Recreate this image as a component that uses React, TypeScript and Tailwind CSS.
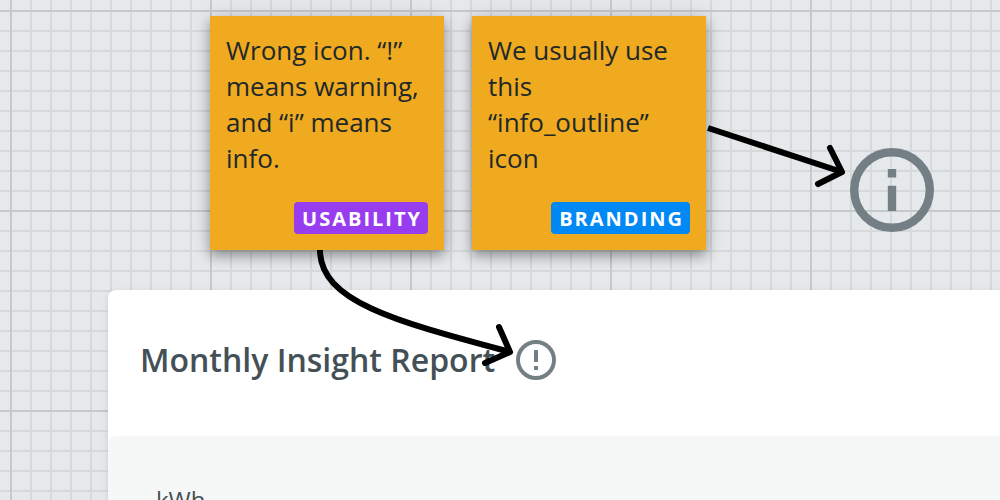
import type { ReactNode } from "react";

type NoteProps = { tag: string; tagClass: string; children: ReactNode };

function StickyNote({ tag, tagClass, children }: NoteProps) {
  return (
    <article className="flex h-[234px] w-[234px] shrink-0 flex-col justify-between bg-[#f0aa1f] p-4 shadow-[0_6px_12px_rgba(0,0,0,0.34),0_0_20px_rgba(0,0,0,0.1)]">
      <p className="text-[26px] leading-9 text-[#20282a]">{children}</p>
      <span
        className={`self-end rounded-sm pt-0.5 pr-1.5 pl-2 text-[20px] leading-[30px] font-bold tracking-[2px] text-white ${tagClass}`}
      >
        {tag}
      </span>
    </article>
  );
}

function RingIcon({ label, className, children }: { label: string; className: string; children: ReactNode }) {
  return (
    <svg viewBox="0 0 20 20" role="img" aria-label={label} className={`shrink-0 text-[#747f85] ${className}`}>
      <circle cx="10" cy="10" r="9" fill="none" stroke="currentColor" strokeWidth="2" />
      {children}
    </svg>
  );
}

function Arrows() {
  return (
    <svg
      aria-hidden="true"
      className="pointer-events-none absolute top-0 left-0 h-[500px] w-[1000px]"
      viewBox="0 0 1000 500"
      fill="none"
      stroke="#000"
      strokeWidth="6"
      strokeLinejoin="round"
    >
      <path d="M708 128 L842 172" />
      <path d="M830 148 L842 172 L818 184" strokeLinecap="round" />
      <path d="M320 250 C320 302 398 322 510 352" />
      <path d="M499 327 L510 352 L485 363" strokeLinecap="round" />
    </svg>
  );
}

export default function App() {
  return (
    <main className="relative h-screen overflow-hidden bg-[#e5e9eb] bg-[linear-gradient(#c6c8c9_2px,transparent_2px),linear-gradient(90deg,#c6c8c9_2px,transparent_2px),linear-gradient(#d5d9da_2px,transparent_2px),linear-gradient(90deg,#d5d9da_2px,transparent_2px)] bg-[length:200px_200px,200px_200px,20px_20px,20px_20px] bg-[position:10px_10px] font-['Open_Sans',sans-serif]">
      <section className="flex pt-4 pl-[210px]">
        <div className="flex gap-7">
          <StickyNote tag="USABILITY" tagClass="bg-[#983cf0]">
            Wrong icon. “!” means warning, and “i” means info.
          </StickyNote>
          <StickyNote tag="BRANDING" tagClass="bg-[#0088f5]">
            We usually use this “info_outline” icon
          </StickyNote>
        </div>
        <div className="ml-36 flex items-end pb-[18px]">
          <RingIcon label="Info" className="size-[84px]">
            <path fill="currentColor" d="M9 5h2v2H9zM9 9h2v6H9z" />
          </RingIcon>
        </div>
      </section>

      <section className="mt-10 ml-[108px] rounded-tl-lg bg-white shadow-[0_2px_6px_rgba(0,0,0,0.12)]">
        <header className="flex items-center gap-[21px] px-8 pt-12 pb-[54px]">
          <h1 className="text-[32px] leading-[44px] font-semibold text-[#445056]">Monthly Insight Report</h1>
          <RingIcon label="Alert" className="size-10">
            <path fill="currentColor" d="M9 5h2v6H9zM9 13h2v2H9z" />
          </RingIcon>
        </header>
        <div className="h-60 rounded-tl-lg bg-[#f6f8f8] px-12 pt-12">
          <p className="text-[24px] leading-8 text-[#445056]">kWh</p>
        </div>
      </section>

      <Arrows />
    </main>
  );
}
